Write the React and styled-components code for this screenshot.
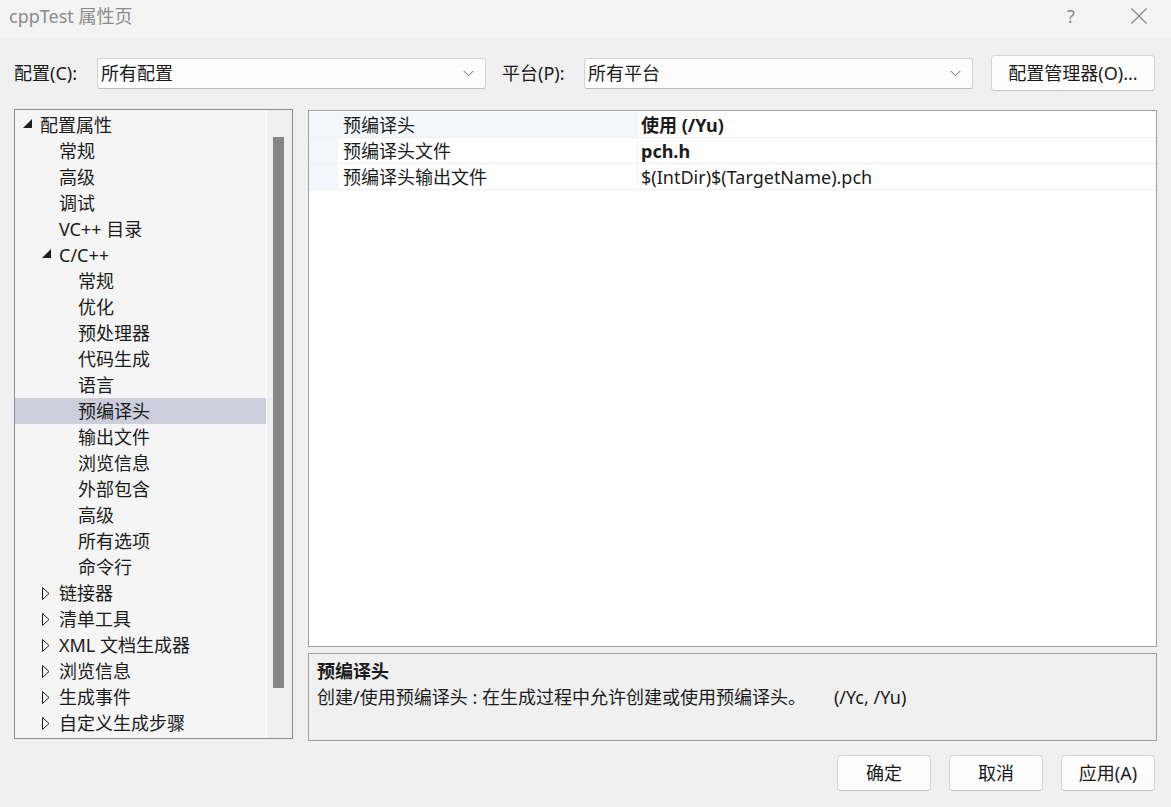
import React from "react";
import styled, { createGlobalStyle } from "styled-components";

const Global = createGlobalStyle`
  html, body { margin: 0; padding: 0; background: #f0f0f0; }
  body {
    font-family: "Noto Sans", "Noto Sans CJK SC", sans-serif;
    font-size: 18px;
    color: #1b1b1b;
  }
  * { box-sizing: border-box; }
`;

const Window = styled.div`
  width: 1171px;
  height: 807px;
  display: flex;
  flex-direction: column;
  background: #f0f0f0;
  overflow: hidden;
`;

const TitleBar = styled.div`
  height: 38px;
  flex: none;
  display: flex;
  align-items: center;
  padding-left: 9px;
  background: #f3f3f3;
`;

const TitleText = styled.div`
  color: #8a8a8a;
  font-size: 18px;
  line-height: 24px;
  margin-top: -6px;
`;

const TitleActions = styled.div`
  margin-left: auto;
  display: flex;
  align-items: center;
  gap: 55px;
  padding-right: 24px;
  margin-top: -6px;
`;

const HelpGlyph = styled.span`
  color: #8a8a8a;
  font-size: 18px;
  line-height: 24px;
  width: 10px;
  text-align: center;
`;

const Toolbar = styled.div`
  height: 36px;
  flex: none;
  margin: 17px 16px 18px 14px;
  display: flex;
  align-items: center;
`;

const FieldLabel = styled.div`
  width: ${(p) => p.$w}px;
  margin-left: ${(p) => p.$ml || 0}px;
  flex: none;
  line-height: 26px;
  white-space: nowrap;
`;

const Combo = styled.div`
  width: 389px;
  height: 31px;
  flex: none;
  display: flex;
  align-items: center;
  padding: 0 11px 0 3px;
  background: #fdfdfd;
  border: 1px solid #d3d3d3;
  border-bottom-color: #bdbdbd;
  border-radius: 3px;
  line-height: 26px;
`;

const ComboText = styled.span`
  flex: 1;
  white-space: nowrap;
`;

const PushButton = styled.button`
  width: ${(p) => p.$w}px;
  height: 36px;
  flex: none;
  margin-left: ${(p) => p.$ml || 0}px;
  padding: 0;
  font-family: inherit;
  font-size: 18px;
  color: #1b1b1b;
  background: #fdfdfd;
  border: 1px solid #d4d4d4;
  border-bottom-color: #c2c2c2;
  border-radius: 4px;
  line-height: 26px;
  white-space: nowrap;
`;

const Main = styled.div`
  height: 632px;
  flex: none;
  display: flex;
  gap: 15px;
  padding: 0 14px;
`;

const TreePanel = styled.div`
  width: 279px;
  height: 630px;
  flex: none;
  display: flex;
  border: 1px solid #8c8d99;
`;

const TreeList = styled.div`
  flex: 1;
  background: #f5f5f5;
  padding-top: 2px;
  border-right: 1px solid #fbfbfb;
  overflow: hidden;
`;

const ScrollTrack = styled.div`
  width: 25px;
  flex: none;
  background: #f0f0f0;
  padding: 27px 0 0 6px;
`;

const ScrollThumb = styled.div`
  width: 11px;
  height: 551px;
  background: #858585;
`;

const TreeRow = styled.div`
  height: 26px;
  display: flex;
  align-items: center;
  padding-left: ${(p) => 8 + 19 * p.$level}px;
  background: ${(p) => (p.$selected ? "#cccedb" : "transparent")};
  line-height: 26px;
  white-space: nowrap;
`;

const Expander = styled.span`
  width: 17px;
  flex: none;
  display: flex;
  align-items: center;
`;

const RightCol = styled.div`
  flex: 1;
  margin-top: 1px;
  display: flex;
  flex-direction: column;
  gap: 6px;
`;

const Grid = styled.div`
  flex: 1;
  background: #ffffff;
  border: 1px solid #a0a0a0;
  padding-top: 1px;
`;

const GridRow = styled.div`
  height: 26px;
  display: flex;
  border-bottom: 1px solid #f0f0f0;
`;

const Gutter = styled.div`
  width: 29px;
  flex: none;
  background: #f3f6fb;
`;

const NameCell = styled.div`
  width: 300px;
  flex: none;
  padding: 2px 0 0 5px;
  line-height: 23px;
  white-space: nowrap;
  background: ${(p) => (p.$active ? "#f3f6fb" : "#ffffff")};
  border-right: 1px solid #f0f0f0;
`;

const ValueCell = styled.div`
  flex: 1;
  padding: 2px 0 0 3px;
  line-height: 23px;
  white-space: nowrap;
  font-weight: ${(p) => (p.$bold ? 700 : 400)};
`;

const Desc = styled.div`
  height: 88px;
  flex: none;
  background: #f0f0f0;
  border: 1px solid #a0a0a0;
  padding: 4px 8px 0;
`;

const DescTitle = styled.div`
  font-weight: 700;
  line-height: 26px;
`;

const DescText = styled.div`
  font-size: 18px;
  line-height: 26px;
  white-space: pre;
`;

const Footer = styled.div`
  flex: none;
  margin-top: 14px;
  padding-right: 16px;
  display: flex;
  justify-content: flex-end;
  gap: 18px;
`;

const OpenTri = () => (
  <svg width="9" height="9" viewBox="0 0 9 9" style={{ marginTop: -3 }}>
    <polygon points="9,0 9,9 0,9" fill="#1e1e1e" />
  </svg>
);

const ClosedTri = () => (
  <svg width="8" height="13" viewBox="0 0 8 13">
    <polygon points="0.5,0.5 7,6.5 0.5,12.5" fill="none" stroke="#1e1e1e" strokeWidth="1" />
  </svg>
);

const Chevron = () => (
  <svg width="11" height="7" viewBox="0 0 11 7">
    <polyline points="0.5,0.8 5.5,5.8 10.5,0.8" fill="none" stroke="#666" strokeWidth="1" />
  </svg>
);

const CloseX = () => (
  <svg width="16" height="16" viewBox="0 0 16 16">
    <line x1="0.5" y1="0.5" x2="15.5" y2="15.5" stroke="#8a8a8a" strokeWidth="1.3" />
    <line x1="15.5" y1="0.5" x2="0.5" y2="15.5" stroke="#8a8a8a" strokeWidth="1.3" />
  </svg>
);

const tree = [
  { label: "配置属性", level: 0, exp: "open" },
  { label: "常规", level: 1 },
  { label: "高级", level: 1 },
  { label: "调试", level: 1 },
  { label: "VC++ 目录", level: 1 },
  { label: "C/C++", level: 1, exp: "open" },
  { label: "常规", level: 2 },
  { label: "优化", level: 2 },
  { label: "预处理器", level: 2 },
  { label: "代码生成", level: 2 },
  { label: "语言", level: 2 },
  { label: "预编译头", level: 2, selected: true },
  { label: "输出文件", level: 2 },
  { label: "浏览信息", level: 2 },
  { label: "外部包含", level: 2 },
  { label: "高级", level: 2 },
  { label: "所有选项", level: 2 },
  { label: "命令行", level: 2 },
  { label: "链接器", level: 1, exp: "closed" },
  { label: "清单工具", level: 1, exp: "closed" },
  { label: "XML 文档生成器", level: 1, exp: "closed" },
  { label: "浏览信息", level: 1, exp: "closed" },
  { label: "生成事件", level: 1, exp: "closed" },
  { label: "自定义生成步骤", level: 1, exp: "closed" },
];

const props = [
  { name: "预编译头", value: "使用 (/Yu)", bold: true, active: true },
  { name: "预编译头文件", value: "pch.h", bold: true },
  { name: "预编译头输出文件", value: "$(IntDir)$(TargetName).pch" },
];

export default function App() {
  return (
    <Window>
      <Global />
      <TitleBar>
        <TitleText>cppTest 属性页</TitleText>
        <TitleActions>
          <HelpGlyph>?</HelpGlyph>
          <CloseX />
        </TitleActions>
      </TitleBar>

      <Toolbar>
        <FieldLabel $w={83}>配置(C):</FieldLabel>
        <Combo>
          <ComboText>所有配置</ComboText>
          <Chevron />
        </Combo>
        <FieldLabel $w={82} $ml={16}>平台(P):</FieldLabel>
        <Combo>
          <ComboText>所有平台</ComboText>
          <Chevron />
        </Combo>
        <PushButton $w={164} $ml={18}>配置管理器(O)...</PushButton>
      </Toolbar>

      <Main>
        <TreePanel>
          <TreeList>
            {tree.map((t, i) => (
              <TreeRow key={i} $level={t.level} $selected={t.selected}>
                <Expander>
                  {t.exp === "open" && <OpenTri />}
                  {t.exp === "closed" && <ClosedTri />}
                </Expander>
                {t.label}
              </TreeRow>
            ))}
          </TreeList>
          <ScrollTrack>
            <ScrollThumb />
          </ScrollTrack>
        </TreePanel>

        <RightCol>
          <Grid>
            {props.map((p, i) => (
              <GridRow key={i}>
                <Gutter />
                <NameCell $active={p.active}>{p.name}</NameCell>
                <ValueCell $bold={p.bold}>{p.value}</ValueCell>
              </GridRow>
            ))}
          </Grid>
          <Desc>
            <DescTitle>预编译头</DescTitle>
            <DescText>{"创建/使用预编译头 : 在生成过程中允许创建或使用预编译头。      (/Yc, /Yu)"}</DescText>
          </Desc>
        </RightCol>
      </Main>

      <Footer>
        <PushButton $w={94}>确定</PushButton>
        <PushButton $w={94}>取消</PushButton>
        <PushButton $w={94}>应用(A)</PushButton>
      </Footer>
    </Window>
  );
}
